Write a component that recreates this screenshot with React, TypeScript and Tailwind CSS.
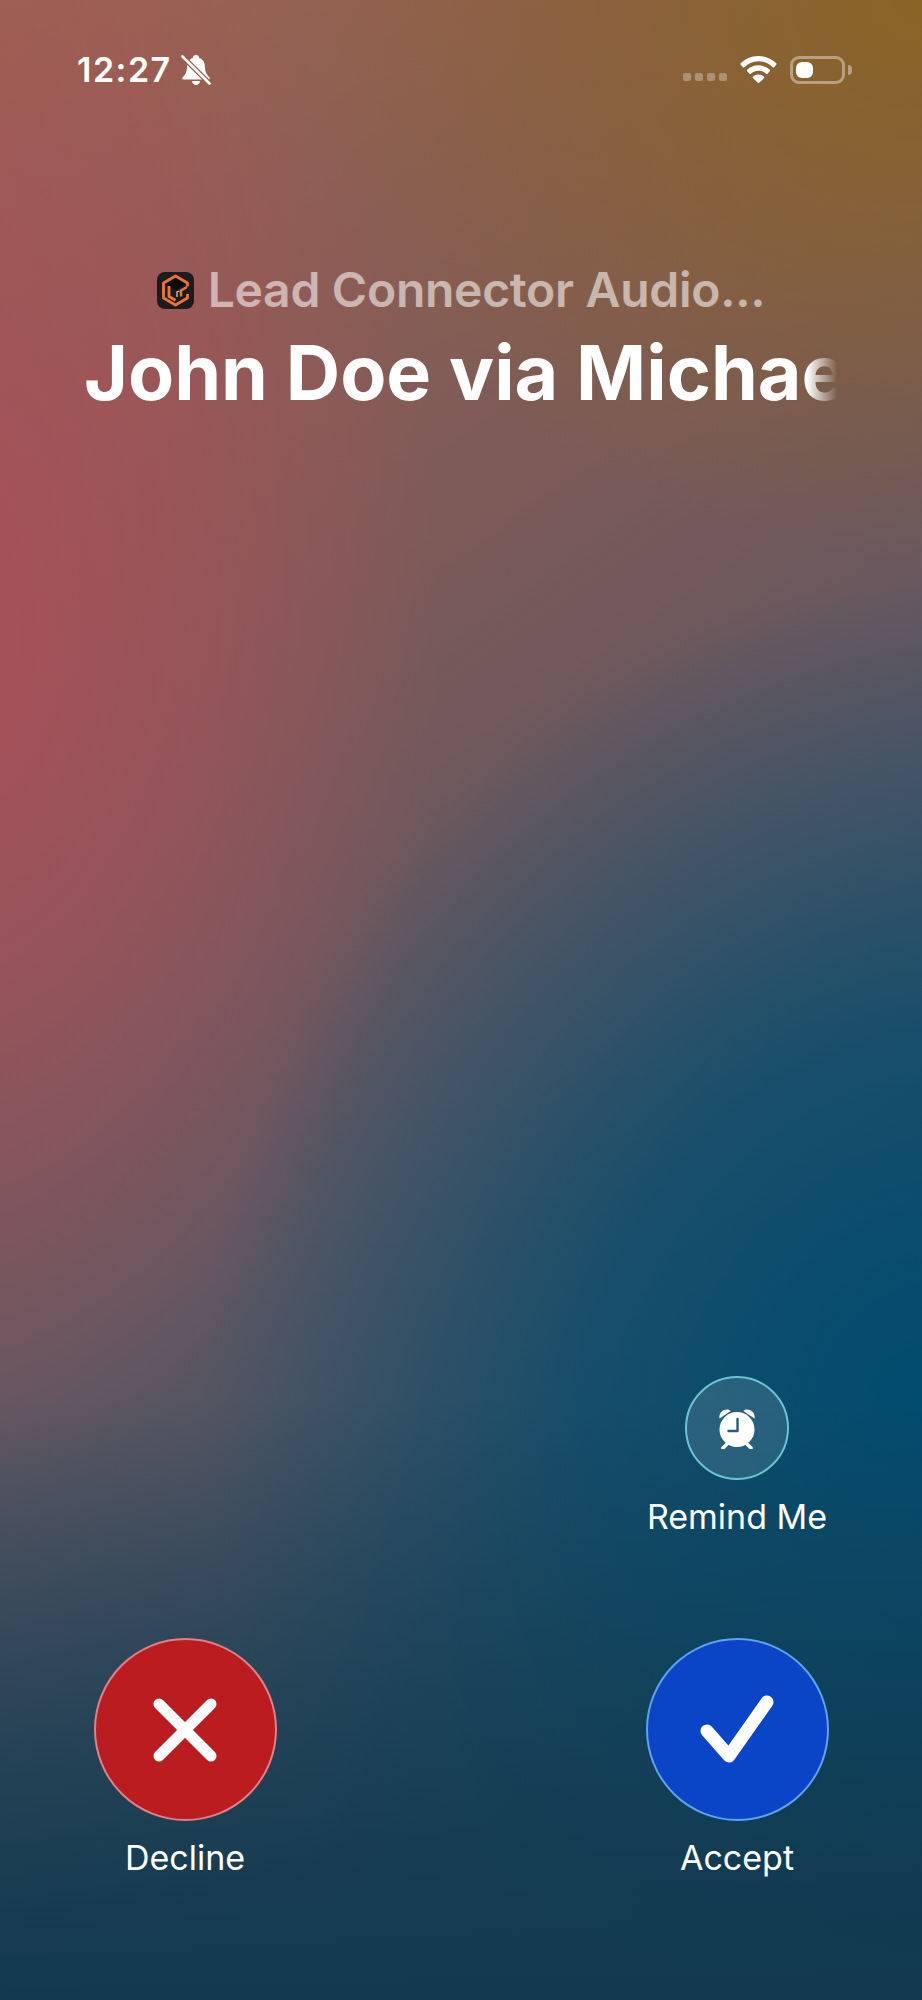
import React from "react";

const BellSlash = () => (
  <svg width="30" height="32" viewBox="0 0 30 32" className="ml-[9px]">
    <path d="M15 1c-2 0-3 1.300-3.200 3C7.500 5.300 6 9 6 14c0 4-2 7-4.500 9.500-.7 1 0 2 1 2h25c1 0 1.700-1 1-2C26 21 24 18 24 14c0-5-1.500-8.700-5.800-10C18 2.300 17 1 15 1z" fill="#fff" />
    <path d="M11 27h8c-.3 2.500-2 4-4 4s-3.700-1.500-4-4z" fill="#fff" />
    <path d="M1.500 2.500l27 27" stroke="#9a5f4d" strokeWidth="5.200" />
    <path d="M1.500 2.500l27 27" stroke="#fff" strokeWidth="2.600" strokeLinecap="round" />
  </svg>
);

const Wifi = () => (
  <svg width="37" height="27" viewBox="0 0 37 27">
    <path d="M18.500 0C11.500 0 5.300 2.800.7 7.300c-.4.400-.4 1 0 1.400l2.300 2.500c.4.400 1 .4 1.400 0C8.100 7.500 13 5.300 18.500 5.300s10.400 2.200 14.100 5.900c.4.400 1 .4 1.400 0l2.300-2.500c.4-.4.4-1 0-1.400C31.700 2.800 25.500 0 18.500 0z" fill="#fff" />
    <path d="M18.500 9.300c-4.400 0-8.400 1.700-11.300 4.500-.4.400-.4 1 0 1.400l2.300 2.500c.4.400 1 .4 1.400 0 2-1.900 4.700-3 7.600-3s5.600 1.100 7.600 3c.4.400 1 .4 1.400 0l2.300-2.500c.4-.4.4-1 0-1.400-2.900-2.800-6.900-4.500-11.300-4.500z" fill="#fff" />
    <path d="M18.500 18.500c-2.200 0-4.200.9-5.600 2.200-.4.400-.4 1 0 1.400l4.900 4.600c.4.400 1 .4 1.400 0l4.900-4.600c.4-.4.4-1 0-1.400-1.400-1.300-3.400-2.200-5.600-2.200z" fill="#fff" />
  </svg>
);

const LeadLogo = () => (
  <svg width="37" height="37" viewBox="0 0 37 37" className="shrink-0">
    <rect width="37" height="37" rx="8" fill="#1b1c1e" />
    <path d="M18.500 5l11 6.500-11 6.500-11-6.500z" fill="#0b0b0c" />
    <path d="M6.500 21V11L18.500 4 30.500 11V14.500" fill="none" stroke="#ef7430" strokeWidth="2.800" strokeLinejoin="round" />
    <path d="M6.500 15v11l12 7 12-7v-4" fill="none" stroke="#ef7430" strokeWidth="2.800" strokeLinejoin="round" />
    <path d="M12 14v10.500l6.500 3.800" fill="none" stroke="#ef7430" strokeWidth="2.800" />
    <path d="M30 15l-6 3.500v6" fill="none" stroke="#ef7430" strokeWidth="2.400" />
    <path d="M20 25v-5l2.500-1" fill="none" stroke="#c9c9c9" strokeWidth="1.300" />
  </svg>
);

const AlarmIcon = () => (
  <svg width="38" height="41" viewBox="0 0 38 41">
    <path d="M1.500 10.500C.5 6 4 1.500 9 1.500c1.500 0 3 .7 3.700 1.500z" fill="#fff" />
    <path d="M36.500 10.500C37.500 6 34 1.500 29 1.500c-1.500 0-3 .7-3.700 1.500z" fill="#fff" />
    <circle cx="19" cy="21.500" r="17.500" fill="#fff" />
    <path d="M5 40l5-5M33 40l-5-5" stroke="#fff" strokeWidth="3.500" strokeLinecap="round" />
    <path d="M19.500 11v12H10.500" fill="none" stroke="#235f80" strokeWidth="2.400" strokeLinecap="round" strokeLinejoin="round" />
  </svg>
);

const StatusBar = () => (
  <div className="flex h-[31px] items-center justify-between pl-[77px] pr-[70px]">
    <div className="flex items-center">
      <span className="text-[34px] leading-none font-semibold tracking-[1.5px] text-white">12:27</span>
      <BellSlash />
    </div>
    <div className="flex items-center">
      <div className="mt-[14px] flex gap-[4px]">
        {[0, 1, 2, 3].map((i) => (
          <div key={i} className="h-[8px] w-[8px] rounded-[2px] bg-white/30" />
        ))}
      </div>
      <div className="ml-[13px]">
        <Wifi />
      </div>
      <div className="ml-[13px] h-[28px] w-[55px] rounded-[9px] border-[3px] border-white/40 p-[3px]">
        <div className="h-full w-[17px] rounded-[6px] bg-white" />
      </div>
      <div className="ml-[3px] h-[10px] w-[4px] rounded-r-full bg-white/40" />
    </div>
  </div>
);

const CallAction = ({
  label,
  circle,
  children,
}: {
  label: string;
  circle: string;
  children: React.ReactNode;
}) => (
  <div className="flex w-[200px] flex-col items-center">
    <div className={circle}>{children}</div>
    <span className="mt-[14px] text-[34px] leading-[46px] text-white">{label}</span>
  </div>
);

export default function App() {
  return (
    <div className="flex h-[2000px] w-[922px] flex-col overflow-hidden bg-[linear-gradient(to_top,#12394f_0%,#12394fa0_12%,#12394f00_30%),radial-gradient(ellipse_720px_820px_at_922px_1400px,#024c6f_0%,#024c6fb0_45%,#024c6f00_100%),radial-gradient(ellipse_480px_850px_at_-40px_640px,#a8505a_0%,#a8505a80_55%,#a8505a00_100%),radial-gradient(ellipse_620px_560px_at_922px_0px,#8a6425_0%,#8a642500_100%),linear-gradient(145deg,#9c6450_0%,#7c5a58_32%,#5e5762_54%,#2e4b5f_78%,#0c3852_100%)] font-['Inter',sans-serif]">
      <div className="pt-[54px]">
        <StatusBar />
      </div>

      {/* Caller */}
      <div className="mt-[176px] flex items-center justify-center gap-[14px]">
        <LeadLogo />
        <span className="text-[48px] leading-[58px] font-semibold tracking-[-0.28px] text-white/55">Lead Connector Audio...</span>
      </div>
      <div className="ml-[84px] mr-[85px] mt-[8px] overflow-hidden whitespace-nowrap text-[75.3px] leading-[92px] font-bold text-white [mask-image:linear-gradient(to_right,#000_96%,transparent_100%)]">
        John Doe via Michae
      </div>

      {/* Actions */}
      <div className="flex flex-1 flex-col justify-end px-[85px] pb-[119px]">
        <div className="flex justify-end">
          <CallAction
            label="Remind Me"
            circle="flex h-[104px] w-[104px] items-center justify-center rounded-full border-2 border-[#6cc3d6] bg-white/12"
          >
            <AlarmIcon />
          </CallAction>
        </div>
        <div className="mt-[98px] flex justify-between">
          <CallAction
            label="Decline"
            circle="flex h-[183px] w-[183px] items-center justify-center rounded-full border-2 border-[#e0808a] bg-[#bb1c20]"
          >
            <svg width="64" height="64" viewBox="0 0 64 64">
              <path d="M6 6l52 52M58 6L6 58" stroke="#fff" strokeWidth="11" strokeLinecap="round" />
            </svg>
          </CallAction>
          <CallAction
            label="Accept"
            circle="flex h-[183px] w-[183px] items-center justify-center rounded-full border-2 border-[#5ea4ea] bg-[#0a45c8]"
          >
            <svg width="74" height="70" viewBox="0 0 74 70">
              <path d="M7 36l22 25 38-54" fill="none" stroke="#fff" strokeWidth="13" strokeLinecap="round" strokeLinejoin="round" />
            </svg>
          </CallAction>
        </div>
      </div>
    </div>
  );
}
